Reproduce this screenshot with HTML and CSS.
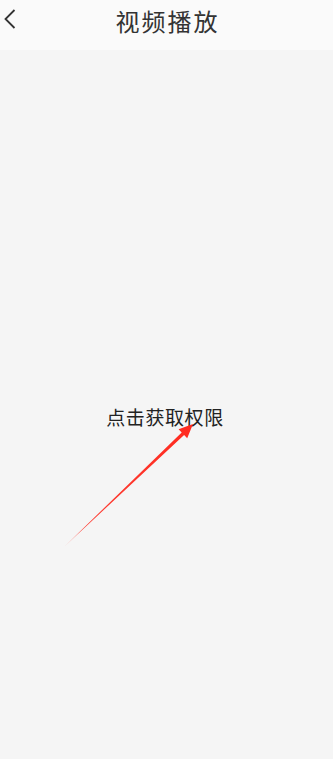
FILE: index.html
```html
<!DOCTYPE html>
<html lang="zh-CN">
<head>
<meta charset="utf-8">
<title>视频播放</title>
<link rel="stylesheet" href="styles.css">
</head>
<body>
<div class="page">
  <header class="topbar">
    <span class="back" aria-label="返回">
      <svg width="14" height="22" viewBox="0 0 14 22"><polyline points="11.5,1 2.5,10 11.5,19" fill="none" stroke="#333" stroke-width="1.8" stroke-linejoin="miter"/></svg>
    </span>
    <h1 class="title">视频播放</h1>
  </header>
  <main class="content">
    <p class="permission">点击获取权限</p>
  </main>
  <svg class="arrow" width="333" height="759" viewBox="0 0 333 759">
    <defs>
      <linearGradient id="fade" x1="64" y1="547" x2="193" y2="424" gradientUnits="userSpaceOnUse">
        <stop offset="0" stop-color="#ff2a1f" stop-opacity="0.3"/>
        <stop offset="0.15" stop-color="#ff2a1f" stop-opacity="0.9"/>
        <stop offset="1" stop-color="#ff2a1f"/>
      </linearGradient>
    </defs>
    <polygon fill="url(#fade)" points="64,547 181.7,432.4 178.6,429.2 193,424 187.2,438.2 184.1,435"/>
  </svg>
</div>
</body>
</html>
```
FILE: styles.css
```css
html, body {
  margin: 0;
  padding: 0;
  background: #f5f5f5;
}
.page {
  position: relative;
  width: 333px;
  height: 759px;
  overflow: hidden;
  font-family: "Noto Sans CJK SC", "Noto Sans", sans-serif;
  color: #333;
}
.topbar {
  position: relative;
  height: 50px;
  background: #fafafa;
  display: flex;
  align-items: center;
  justify-content: center;
}
.back {
  position: absolute;
  left: 3px;
  top: 9px;
  width: 14px;
  height: 22px;
  display: flex;
}
.title {
  margin: 0 0 8px 0;
  font-size: 24px;
  font-weight: 400;
  line-height: 30px;
  letter-spacing: 2px;
  padding-left: 2px;
  color: #333;
}
.content {
  padding-top: 354px;
  display: flex;
  justify-content: center;
}
.permission {
  margin: 0;
  font-size: 19px;
  line-height: 26px;
  color: #222;
  letter-spacing: 0.6px;
  padding-right: 3px;
}
.arrow {
  position: absolute;
  left: 0;
  top: 0;
  pointer-events: none;
}
```
